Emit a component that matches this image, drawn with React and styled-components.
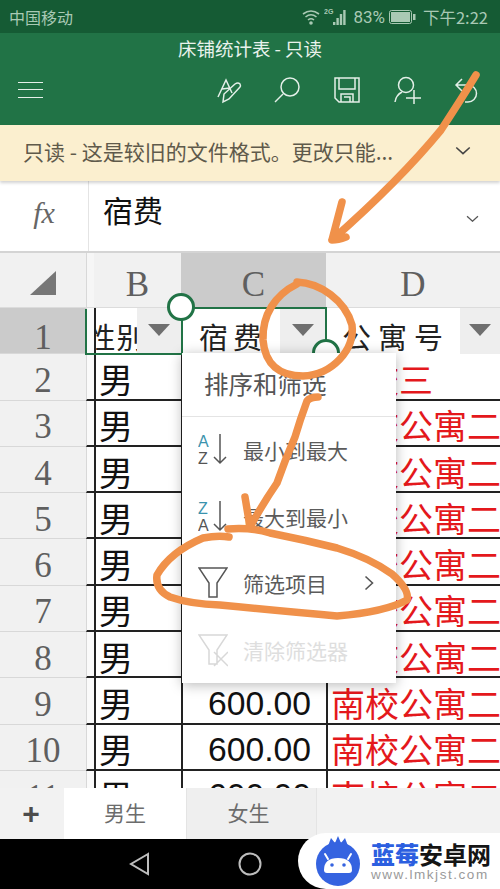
import React from "react";
import styled, { createGlobalStyle } from "styled-components";

const CJK = '"Noto Sans CJK SC", "Noto Sans", sans-serif';
const SERIF = '"Liberation Serif", "Noto Sans CJK SC", serif';
const GREEN = "#217346";
const ORANGE = "#f0914a";

const Global = createGlobalStyle`
  html, body { margin: 0; padding: 0; background: #000; }
  * { box-sizing: border-box; }
`;

const Screen = styled.div`
  position: relative;
  width: 500px;
  height: 889px;
  overflow: hidden;
  display: flex;
  flex-direction: column;
  font-family: ${CJK};
  background: #fff;
`;

const StatusBar = styled.div`
  height: 33px;
  flex: none;
  background: #155b34;
  color: #a9c9b4;
  display: flex;
  align-items: center;
  padding: 0 12px 0 9px;
  font-size: 16px;
`;
const Carrier = styled.span`
  flex: 1;
`;
const StatusRight = styled.div`
  display: flex;
  align-items: center;
  font-size: 16.5px;
`;
const Percent = styled.span`
  margin: 0 4px 0 3px;
  font-size: 17px;
  font-family: "Roboto", ${CJK};
`;
const Clock = styled.span`
  margin-left: 7px;
`;

const TitleBar = styled.div`
  height: 92px;
  flex: none;
  background: ${GREEN};
  display: flex;
  flex-direction: column;
`;
const DocTitle = styled.div`
  height: 30px;
  color: #e9f2ec;
  font-size: 18.5px;
  line-height: 30px;
  text-align: center;
`;
const Toolbar = styled.div`
  position: relative;
  flex: 1;
  display: flex;
  align-items: center;
  padding: 0 20px 9px 18px;
`;
const Hamburger = styled.div`
  width: 28px;
  height: 16px;
  margin-right: 173px;
  border-top: 1.5px solid #e6f0ea;
  border-bottom: 1.5px solid #e6f0ea;
  display: flex;
  align-items: center;
  &::before {
    content: "";
    flex: 1;
    height: 1.5px;
    background: #e6f0ea;
  }
`;
const ToolIcon = styled.svg`
  flex: none;
  display: block;
  margin-right: ${(p) => p.$gap || 0}px;
  fill: none;
  stroke: #e3efe8;
  stroke-width: 1.5;
`;

const Notice = styled.div`
  height: 56px;
  flex: none;
  background: #fbefcf;
  color: #5f5a4b;
  font-size: 21px;
  display: flex;
  align-items: center;
  padding: 0 29px 4px 23px;
  justify-content: space-between;
  box-shadow: 0 2px 3px rgba(0, 0, 0, 0.18);
  position: relative;
  white-space: nowrap;
`;

const FormulaBar = styled.div`
  height: 72px;
  flex: none;
  display: flex;
  background: #fff;
  border-bottom: 2px solid #d4d4d4;
`;
const FxCell = styled.div`
  width: 89px;
  flex: none;
  border-right: 1px solid #e4e4e4;
  display: flex;
  align-items: center;
  justify-content: center;
  font: italic 30px ${SERIF};
  color: #666;
  padding-bottom: 6px;
`;
const FormulaText = styled.div`
  flex: 1;
  padding-left: 14px;
  font-size: 30px;
  color: #111;
  display: flex;
  align-items: center;
  padding-bottom: 14px;
`;
const FormulaChevron = styled.div`
  width: 56px;
  display: flex;
  align-items: center;
  justify-content: center;
  padding-top: 5px;
`;

const Sheet = styled.div`
  position: relative;
  flex: 1;
  overflow: hidden;
  background: #fff;
`;
const Grid = styled.div`
  display: grid;
  grid-template-columns: 86px 8px 87px 145px 174px;
  grid-auto-rows: 46.3px;
`;
const HeaderRow = styled.div`
  display: grid;
  grid-template-columns: 86px 8px 87px 145px 174px;
  height: 55px;
  background: #f1f1f1;
  border-bottom: 1px solid #dcdcdc;
`;
const Corner = styled.div`
  display: flex;
  align-items: flex-end;
  justify-content: flex-end;
  padding: 0 30px 12px 0;
`;
const ColHead = styled.div`
  background: ${(p) => (p.$active ? "#cbcbcb" : "#f1f1f1")};
  font: 35px ${SERIF};
  color: #5f5f5f;
  display: flex;
  align-items: center;
  justify-content: center;
  padding-top: 9px;
`;
const Gutter = styled.div`
  background: #f6f6f6;
  border-left: 1px solid #d8d8d8;
`;
const RowHead = styled.div`
  background: ${(p) => (p.$active ? "#cbcbcb" : "#f1f1f1")};
  border-bottom: 1px solid #d8d8d8;
  font: 35px ${SERIF};
  color: #5f5f5f;
  display: flex;
  align-items: center;
  justify-content: center;
  padding-top: ${(p) => (p.$active ? 13 : 7)}px;
  line-height: 1;
`;
const RowGutter = styled.div`
  background: #fafafa;
  border-left: 1px solid #d8d8d8;
  border-bottom: 2px solid ${(p) => (p.$plain ? "transparent" : "#222")};
`;
const FilterCell = styled.div`
  display: flex;
  overflow: hidden;
  background: #fff;
  border-left: ${(p) => (p.$noLine ? "none" : "2px solid #222")};
`;
const FilterLabel = styled.div`
  flex: 1;
  min-width: 0;
  overflow: hidden;
  display: flex;
  justify-content: ${(p) => p.$align || "flex-start"};
  padding-left: ${(p) => p.$pad || 0}px;
  padding-top: 5px;
  font-size: 29px;
  letter-spacing: ${(p) => p.$track || 5}px;
  color: #222;
  line-height: 46px;
  white-space: nowrap;
`;
const FilterButton = styled.div`
  width: ${(p) => p.$w}px;
  flex: none;
  background: #eeeeee;
  display: flex;
  justify-content: center;
  padding-top: 16px;
  &::after {
    content: "";
    width: 0;
    height: 0;
    border-left: 11px solid transparent;
    border-right: 11px solid transparent;
    border-top: 12px solid #6f6f6f;
  }
`;
const Cell = styled.div`
  border-left: 2px solid #222;
  border-bottom: 2px solid #222;
  background: #fff;
  display: flex;
  align-items: center;
  overflow: hidden;
  white-space: nowrap;
  line-height: 1;
  padding-top: 5px;
`;
const GenderCell = styled(Cell)`
  font-size: 34px;
  color: #111;
  padding-left: 3px;
`;
const FeeCell = styled(Cell)`
  font: 33.7px "Liberation Sans", sans-serif;
  color: #111;
  justify-content: flex-end;
  padding-right: 15px;
`;
const DormCell = styled(Cell)`
  font-size: 34px;
  color: #e4181c;
  padding-left: 3px;
`;

const Frame = styled.div`
  position: absolute;
  left: 181px;
  top: 54px;
  width: 146px;
  height: 48px;
  border: 2px solid ${GREEN};
  border-bottom: none;
`;
const LeftFrame = styled.div`
  position: absolute;
  left: 85px;
  top: 56px;
  width: 97px;
  height: 46px;
  border-left: 2px solid ${GREEN};
  border-bottom: 2px solid ${GREEN};
`;
const Handle = styled.div`
  position: absolute;
  left: ${(p) => p.$x - 14}px;
  top: ${(p) => p.$y - 14}px;
  width: 28px;
  height: 28px;
  border-radius: 50%;
  border: 3px solid ${GREEN};
  background: #fff;
`;

const Menu = styled.div`
  position: absolute;
  left: 182px;
  top: 353px;
  width: 214px;
  height: 330px;
  background: #fff;
  box-shadow: 0 2px 12px rgba(0, 0, 0, 0.28);
  display: flex;
  flex-direction: column;
`;
const MenuTitle = styled.div`
  height: 64px;
  flex: none;
  border-bottom: 1px solid #e4e4e4;
  padding-left: 22px;
  padding-bottom: 2px;
  font-size: 24.5px;
  color: #555;
  display: flex;
  align-items: center;
`;
const MenuItem = styled.div`
  height: 66.6px;
  flex: none;
  display: flex;
  align-items: center;
  padding-left: 16px;
  gap: 15px;
  font-size: 21px;
  color: ${(p) => (p.$disabled ? "#dedede" : "#5b5b5b")};
`;
const MenuIcon = styled.svg`
  width: 30px;
  height: 36px;
  flex: none;
  fill: none;
  stroke: ${(p) => (p.$disabled ? "#d8d8d8" : "#555")};
  stroke-width: 1.5;
`;
const MenuLabel = styled.span`
  flex: 1;
`;
const SortLetter = styled.text`
  font: 16px "Liberation Sans", sans-serif;
  stroke: none;
  fill: ${(p) => (p.$accent ? "#3b93ad" : "#555")};
`;
const Caret = styled.svg`
  margin-right: 22px;
  fill: none;
  stroke: #555;
  stroke-width: 1.6;
`;

const TabBar = styled.div`
  height: 51px;
  flex: none;
  background: #f2f2f2;
  display: flex;
  align-items: stretch;
  position: relative;
`;
const AddTab = styled.div`
  width: 64px;
  display: flex;
  align-items: center;
  justify-content: center;
  font: bold 30px "Liberation Sans", sans-serif;
  color: #4c4c4c;
  padding-right: 2px;
`;
const Tab = styled.div`
  width: ${(p) => p.$w}px;
  background: ${(p) => (p.$active ? "#fff" : "#efefef")};
  border-right: 1px solid #e4e4e4;
  color: #6c6c6c;
  font-size: 21px;
  display: flex;
  align-items: center;
  justify-content: center;
  padding: 0 ${(p) => (p.$active ? 0 : 6)}px 4px 0;
`;

const NavBar = styled.div`
  height: 50px;
  flex: none;
  background: #000;
  display: flex;
  align-items: center;
  padding: 0 0 0 128px;
  gap: 88px;
`;
const NavIcon = styled.svg`
  fill: none;
  stroke: #bdbdbd;
  stroke-width: 2;
`;

const Watermark = styled.div`
  position: absolute;
  left: 298px;
  top: 833px;
  width: 202px;
  height: 56px;
  background: #fff;
  border-radius: 28px 0 0 28px;
  display: flex;
  align-items: center;
  padding-left: 18px;
  gap: 11px;
`;
const WmText = styled.div`
  display: flex;
  flex-direction: column;
`;
const WmName = styled.div`
  font-size: 24px;
  font-weight: 700;
  line-height: 28px;
  color: #151515;
  white-space: nowrap;
  & > b {
    color: #2c5fe0;
  }
`;
const WmUrl = styled.div`
  font: 13.5px "Liberation Sans", sans-serif;
  line-height: 14px;
  letter-spacing: 1.55px;
  color: #9a9a9a;
  white-space: nowrap;
`;

const Ink = styled.svg`
  position: absolute;
  left: 0;
  top: 0;
  width: 500px;
  height: 889px;
  pointer-events: none;
  fill: none;
  stroke: ${ORANGE};
  stroke-width: 7.5;
  stroke-linecap: round;
  stroke-linejoin: round;
`;

const rows = [
  { n: 2, dorm: "南校三" },
  ...[3, 4, 5, 6, 7, 8, 9, 10, 11].map((n) => ({ n, dorm: "南校公寓二" })),
];

const Chevron = ({ w = 16, color = "#555" }) => (
  <svg width={w} height={w * 0.6} viewBox="0 0 16 10" fill="none" stroke={color} strokeWidth="1.6">
    <path d="M1 1.5 L8 8 L15 1.5" />
  </svg>
);

function SortIcon({ top, bottom }) {
  return (
    <MenuIcon viewBox="0 0 30 36">
      <SortLetter $accent x="0" y="15">{top}</SortLetter>
      <SortLetter x="0" y="32">{bottom}</SortLetter>
      <path d="M22 2 V31 M16 25 L22 31 L28 25" />
    </MenuIcon>
  );
}

export default function App() {
  return (
    <Screen>
      <Global />
      <StatusBar>
        <Carrier>中国移动</Carrier>
        <StatusRight>
          <svg width="18" height="16" viewBox="0 0 18 16" fill="none" stroke="#a9c9b4" strokeWidth="1.6">
            <path d="M1 5 Q9 -1 17 5 M3.5 8 Q9 3.5 14.5 8 M6 11 Q9 8.5 12 11" />
            <circle cx="9" cy="14" r="1" fill="#a9c9b4" />
          </svg>
          <svg width="26" height="20" viewBox="0 0 26 20" fill="#a9c9b4" style={{ marginLeft: 4 }}>
            <text x="0" y="7" fontSize="7" fontFamily="Liberation Sans" fontWeight="700">2G</text>
            <rect x="9" y="15" width="2.4" height="3" />
            <rect x="12.4" y="11" width="2.4" height="7" />
            <rect x="15.8" y="7" width="2.4" height="11" />
            <rect x="19.2" y="3" width="2.4" height="15" />
          </svg>
          <Percent>83%</Percent>
          <svg width="27" height="14" viewBox="0 0 27 14">
            <rect x="0.5" y="0.5" width="22" height="13" rx="2" fill="none" stroke="#a9c9b4" />
            <rect x="2" y="2" width="19" height="10" fill="#a9c9b4" />
            <rect x="24" y="4" width="2.5" height="6" fill="#a9c9b4" />
          </svg>
          <Clock>下午2:22</Clock>
        </StatusRight>
      </StatusBar>

      <TitleBar>
        <DocTitle>床铺统计表 - 只读</DocTitle>
        <Toolbar>
          <Hamburger />
          <ToolIcon width="26" height="30" viewBox="218 78 26 30" $gap={32}>
            <path d="M220 100 L228 83 L234 96 M224 92 L232 91" />
            <path d="M225 105 L226 97 L237 87 Q240 85 242 87 Q243 89 242 90 L231 102 Z" />
          </ToolIcon>
          <ToolIcon width="28" height="30" viewBox="276 78 28 30" $gap={32}>
            <circle cx="292" cy="90" r="9" />
            <path d="M285 97 L277 105" />
          </ToolIcon>
          <ToolIcon width="26" height="30" viewBox="336 78 26 30" $gap={34}>
            <path d="M337 81 H361 V105 H341 L337 101 Z" />
            <path d="M341 81 V92 H357 V81 M343 105 V97 H355 V105 M346 100 H352 V105" />
          </ToolIcon>
          <ToolIcon width="28" height="30" viewBox="396 78 28 30" $gap={32}>
            <circle cx="408" cy="88" r="7.5" />
            <path d="M397 105 Q398 98 404 95 M408 101 H423 M416 93 V107" />
          </ToolIcon>
          <ToolIcon width="26" height="30" viewBox="456 78 26 30">
            <path d="M458 88 H470 A8.5 8.5 0 0 1 470 105 H467 M464 82 L458 88 L464 94" />
          </ToolIcon>
        </Toolbar>
      </TitleBar>

      <Notice>
        <span>只读 - 这是较旧的文件格式。更改只能...</span>
        <Chevron w={16} color="#444" />
      </Notice>

      <FormulaBar>
        <FxCell>fx</FxCell>
        <FormulaText>宿费</FormulaText>
        <FormulaChevron>
          <Chevron w={13} color="#555" />
        </FormulaChevron>
      </FormulaBar>

      <Sheet>
        <HeaderRow>
          <Corner>
            <svg width="26" height="24" viewBox="0 0 26 24">
              <path d="M0 24 H26 V0 Z" fill="#777" />
            </svg>
          </Corner>
          <Gutter />
          <ColHead>B</ColHead>
          <ColHead $active>C</ColHead>
          <ColHead>D</ColHead>
        </HeaderRow>
        <Grid>
          <RowHead $active>1</RowHead>
          <RowGutter $plain />
          <FilterCell>
            <FilterLabel $align="center" $track={1}>性别</FilterLabel>
            <FilterButton $w={44} />
          </FilterCell>
          <FilterCell $noLine>
            <FilterLabel $pad={18}>宿费</FilterLabel>
            <FilterButton $w={46} />
          </FilterCell>
          <FilterCell $noLine>
            <FilterLabel $pad={16} $track={7}>公寓号</FilterLabel>
            <FilterButton $w={40} />
          </FilterCell>
          {rows.map((r) => (
            <React.Fragment key={r.n}>
              <RowHead>{r.n}</RowHead>
              <RowGutter />
              <GenderCell>男</GenderCell>
              <FeeCell>{r.n >= 9 ? "600.00" : ""}</FeeCell>
              <DormCell>{r.dorm}</DormCell>
            </React.Fragment>
          ))}
        </Grid>
        <LeftFrame />
        <Frame />
        <Handle $x={181} $y={54} />
        <Handle $x={326} $y={100} />
      </Sheet>

      <TabBar>
        <AddTab>+</AddTab>
        <Tab $active $w={123}>男生</Tab>
        <Tab $w={130}>女生</Tab>
      </TabBar>

      <NavBar>
        <NavIcon width="22" height="24" viewBox="0 0 22 24">
          <path d="M20 2 L3 12 L20 22 Z" />
        </NavIcon>
        <NavIcon width="24" height="24" viewBox="0 0 24 24">
          <circle cx="12" cy="12" r="10.5" />
        </NavIcon>
      </NavBar>

      <Menu>
        <MenuTitle>排序和筛选</MenuTitle>
        <MenuItem>
          <SortIcon top="A" bottom="Z" />
          <MenuLabel>最小到最大</MenuLabel>
        </MenuItem>
        <MenuItem>
          <SortIcon top="Z" bottom="A" />
          <MenuLabel>最大到最小</MenuLabel>
        </MenuItem>
        <MenuItem>
          <MenuIcon viewBox="0 0 30 36">
            <path d="M1 3 H29 L19 18 V32 H11 V18 Z" />
          </MenuIcon>
          <MenuLabel>筛选项目</MenuLabel>
          <Caret width="10" height="16" viewBox="0 0 10 16">
            <path d="M1.5 1.5 L8.5 8 L1.5 14.5" />
          </Caret>
        </MenuItem>
        <MenuItem $disabled>
          <MenuIcon $disabled viewBox="0 0 30 36">
            <path d="M1 3 H29 L19 18 V32 H11 V18 Z M16 20 L30 34 M30 20 L16 34" />
          </MenuIcon>
          <MenuLabel>清除筛选器</MenuLabel>
        </MenuItem>
      </Menu>

      <Watermark>
        <svg width="44" height="50" viewBox="0 0 44 50">
          <circle cx="22" cy="28" r="22" fill="#3563e0" />
          <path d="M12 10 L15 2 L19 7 L22 0 L25 7 L29 2 L32 10 Z" fill="#3563e0" />
          <path d="M8 34 Q8 22 22 22 Q36 22 36 34 Q36 37 33 37 H11 Q8 37 8 34 Z" fill="#fff" />
          <path d="M12 23 L9 18 M32 23 L35 18" stroke="#fff" strokeWidth="2" strokeLinecap="round" />
          <circle cx="16" cy="29" r="1.8" fill="#3563e0" />
          <circle cx="28" cy="29" r="1.8" fill="#3563e0" />
        </svg>
        <WmText>
          <WmName><b>蓝莓</b>安卓网</WmName>
          <WmUrl>www.lmkjst.com</WmUrl>
        </WmText>
      </Watermark>

      <Ink viewBox="0 0 500 889">
        <path d="M476 75 Q462 98 441 130 Q400 180 332 240 Q338 240 346 237 M342 202 L332 240" />
        <path d="M297 282 C320 283 345 300 352 325 C355 350 332 375 303 376 C280 376 265 365 263 340 C262 315 275 295 297 284" />
        <path d="M318 397 Q310 397 307 401 Q300 420 295 437 Q285 460 277 483 Q262 505 250 527 M245 497 L250 527" />
        <path d="M228 529 Q250 527 270 533 Q305 540 337 548 Q370 558 392 574 Q410 590 407 600 Q385 612 337 616 Q290 612 220 605 Q190 604 170 597 Q155 590 157 575 Q170 552 203 538 Q218 535 229 537" />
      </Ink>
    </Screen>
  );
}
